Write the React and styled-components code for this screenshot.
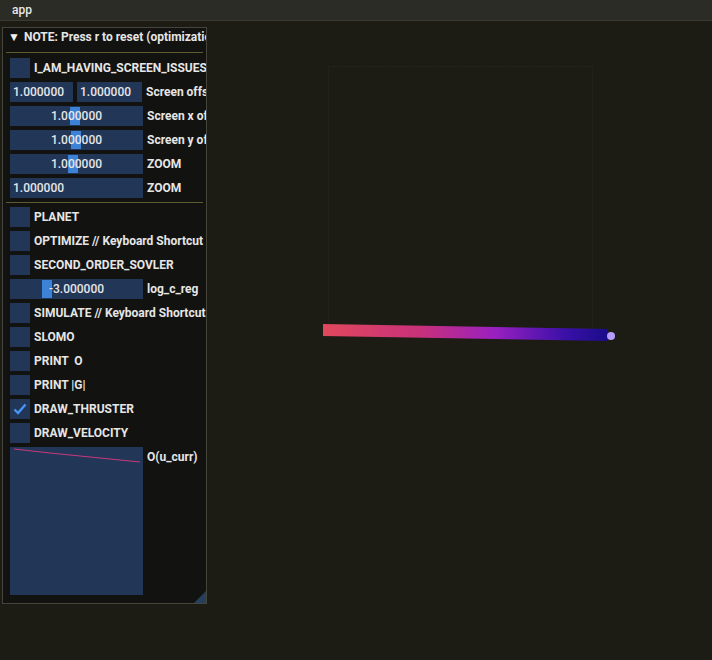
import styled, { createGlobalStyle } from "styled-components";

const GlobalStyle = createGlobalStyle`
  html, body {
    margin: 0;
    padding: 0;
    background: #1c1c15;
  }
  body {
    font-family: Roboto, "Liberation Sans", sans-serif;
    color: #e6e6e6;
  }
`;

const Page = styled.div`
  width: 712px;
  height: 660px;
  position: relative;
  overflow: hidden;
  background: #1c1c15;
  display: flex;
  flex-direction: column;
`;

const TitleBar = styled.div`
  height: 20px;
  background: #2c2c26;
  border-bottom: 1px solid #3a3a30;
  display: flex;
  align-items: center;
  padding-left: 12px;
  font-size: 12px;
  font-weight: 500;
  color: #e8e8e8;
  position: relative;
  z-index: 1;
`;

const Desk = styled.div`
  flex: 1;
  position: relative;
  padding: 6px 0 0 2px;
`;

const Scene = styled.svg`
  position: absolute;
  left: 0;
  top: -21px;
`;

const Window = styled.div`
  position: relative;
  width: 203px;
  height: 575px;
  background: #121210;
  border: 1px solid #45453c;
  overflow: hidden;
  display: flex;
  flex-direction: column;
`;

const Header = styled.div`
  height: 22px;
  display: flex;
  align-items: flex-start;
  gap: 5px;
  padding: 2px 0 0 2px;
  border-bottom: 1px solid #5b5a30;
  margin: 0 3px;
  white-space: nowrap;
  font-size: 12px;
  font-weight: 700;
`;

const Arrow = styled.span`
  font-size: 12px;
  color: #f0f0f0;
  width: 11px;
`;

const Body = styled.div`
  display: flex;
  flex-direction: column;
  gap: 4px;
  padding: 5px 0 0 7px;
`;

const Row = styled.div`
  height: 20px;
  display: flex;
  align-items: center;
  gap: 4px;
  white-space: nowrap;
  font-size: 12px;
  font-weight: 700;
`;

const Box = styled.div`
  width: 20px;
  height: 20px;
  background: #223758;
  display: flex;
  align-items: center;
  justify-content: center;
  flex-shrink: 0;
`;

const Field = styled.div`
  position: relative;
  width: ${(p) => p.$w}px;
  height: 20px;
  background: #223758;
  display: flex;
  align-items: center;
  justify-content: ${(p) => (p.$center ? "center" : "flex-start")};
  padding-left: ${(p) => (p.$center ? 0 : 3)}px;
  box-sizing: border-box;
  flex-shrink: 0;
  font-size: 12px;
  font-weight: 500;
`;

const Grab = styled.div`
  position: absolute;
  top: 1px;
  bottom: 1px;
  width: 10px;
  background: #3c83d8;
`;

const Value = styled.span`
  position: relative;
`;

const Label = styled.span`
  color: #e6e6e6;
  white-space: pre;
`;

const Separator = styled.div`
  height: 1px;
  background: #5b5a30;
  margin-left: -4px;
  width: 197px;
`;

const PlotRow = styled.div`
  display: flex;
  align-items: flex-start;
  gap: 4px;
  font-size: 12px;
  font-weight: 700;
  white-space: nowrap;
`;

const Plot = styled.svg`
  width: 133px;
  height: 148px;
  background: #223758;
  display: block;
  flex-shrink: 0;
`;

const PlotLabel = styled.span`
  margin-top: 3px;
`;

const Grip = styled.svg`
  position: absolute;
  right: 0;
  bottom: 0;
`;

const Check = () => (
  <svg width="14" height="12" viewBox="0 0 14 12">
    <path d="M1.5 6.5 L5 10 L12.5 1.5" fill="none" stroke="#4596f5" strokeWidth="2.4" />
  </svg>
);

const CheckRow = ({ label, checked }) => (
  <Row>
    <Box>{checked && <Check />}</Box>
    <Label>{label}</Label>
  </Row>
);

const SliderRow = ({ value, grab, label }) => (
  <Row>
    <Field $w={133} $center>
      <Grab style={{ left: grab }} />
      <Value>{value}</Value>
    </Field>
    <Label>{label}</Label>
  </Row>
);

export default function App() {
  return (
    <>
      <GlobalStyle />
      <Page>
        <TitleBar>app</TitleBar>
        <Desk>
          <Scene width="712" height="660">
            <defs>
              <linearGradient id="trail" x1="0" x2="1" y1="0" y2="0">
                <stop offset="0" stopColor="#e0485c" />
                <stop offset="0.35" stopColor="#c8307c" />
                <stop offset="0.6" stopColor="#9a20c0" />
                <stop offset="0.85" stopColor="#3a10a8" />
                <stop offset="1" stopColor="#1a0c88" />
              </linearGradient>
            </defs>
            <rect x="328.5" y="66.5" width="264" height="262" fill="none" stroke="#24241b" strokeDasharray="2 1" />
            <polygon points="323,324 608,329 608,341 323,336" fill="url(#trail)" />
            <circle cx="611" cy="336" r="4" fill="#b49cff" />
          </Scene>
          <Window>
            <Header>
              <Arrow>▼</Arrow>
              <span>NOTE: Press r to reset (optimization)</span>
            </Header>
            <Body>
              <CheckRow label="I_AM_HAVING_SCREEN_ISSUES" />
              <Row>
                <Field $w={63}>1.000000</Field>
                <Field $w={65}>1.000000</Field>
                <Label>Screen offset</Label>
              </Row>
              <SliderRow value="1.000000" grab={60} label="Screen x offset" />
              <SliderRow value="1.000000" grab={61} label="Screen y offset" />
              <SliderRow value="1.000000" grab={58} label="ZOOM" />
              <Row>
                <Field $w={133}>1.000000</Field>
                <Label>ZOOM</Label>
              </Row>
              <Separator />
              <CheckRow label="PLANET" />
              <CheckRow label="OPTIMIZE // Keyboard Shortcut" />
              <CheckRow label="SECOND_ORDER_SOVLER" />
              <SliderRow value="-3.000000" grab={32} label="log_c_reg" />
              <CheckRow label="SIMULATE // Keyboard Shortcut" />
              <CheckRow label="SLOMO" />
              <CheckRow label="PRINT  O" />
              <CheckRow label="PRINT |G|" />
              <CheckRow label="DRAW_THRUSTER" checked />
              <CheckRow label="DRAW_VELOCITY" />
              <PlotRow>
                <Plot viewBox="0 0 133 148">
                  <polyline
                    points="4,2 40,6 70,9 100,12 130,15"
                    fill="none"
                    stroke="#c8387a"
                    strokeWidth="1.2"
                  />
                </Plot>
                <PlotLabel>O(u_curr)</PlotLabel>
              </PlotRow>
            </Body>
            <Grip width="12" height="12" viewBox="0 0 12 12">
              <polygon points="12,0 12,12 0,12" fill="#26405c" />
            </Grip>
          </Window>
        </Desk>
      </Page>
    </>
  );
}
